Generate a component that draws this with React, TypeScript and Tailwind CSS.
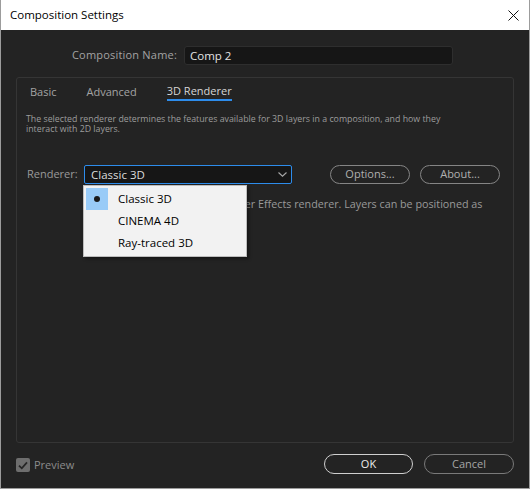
import { FC } from "react";

const Chevron: FC = () => (
  <svg width="9" height="5" viewBox="0 0 9 5" className="shrink-0">
    <path d="M0.5 0.5 L4.5 4.2 L8.5 0.5" fill="none" stroke="#a8a8a8" strokeWidth="1.1" />
  </svg>
);

const items = ["Classic 3D", "CINEMA 4D", "Ray-traced 3D"];

export default function App() {
  return (
    <div className="w-[530px] h-[489px] flex flex-col border-x border-b border-[#9c9c9c] bg-[#232323] font-['Open_Sans',sans-serif]">
      {/* title bar */}
      <div className="h-[30px] shrink-0 bg-white flex items-center justify-between pl-[9px] pr-[10px]">
        <span className="text-[11.5px] text-black">Composition Settings</span>
        <svg width="11" height="11" viewBox="0 0 11 11">
          <path d="M0.5 0.5 L10.5 10.5 M10.5 0.5 L0.5 10.5" stroke="#111" strokeWidth="1" />
        </svg>
      </div>

      <div className="flex-1 flex flex-col px-[15px]">
        {/* name row */}
        <div className="mt-[16px] flex items-center h-[19px]">
          <span className="w-[161px] text-right text-[11px] text-[#a3a3a3] tracking-[0.2px]">Composition Name:</span>
          <div className="ml-[7px] w-[269px] h-[19px] flex items-center bg-[#161616] border border-[#2e2e2e] rounded-[3px] pl-[5px] text-[11.5px] text-[#e2e2e2]">
            Comp 2
          </div>
        </div>

        {/* panel */}
        <div className="mt-[12px] flex-1 border border-[#353535] rounded-[3px] flex flex-col">
          <div className="pt-[5px] pl-[13px] flex gap-[30px] text-[11px]">
            <div className="h-[18px] flex items-center text-[#a3a3a3]">Basic</div>
            <div className="h-[18px] flex items-center text-[#a3a3a3]">Advanced</div>
            <div className="flex flex-col">
              <div className="h-[16px] flex items-center text-[#d6d6d6]">3D Renderer</div>
              <div className="h-[2px] bg-[#2d8ceb]" />
            </div>
          </div>

          <p className="mt-[13px] pl-[9px] w-[440px] text-[8.8px] leading-[10px] text-[#9c9c9c]">
            The selected renderer determines the features available for 3D layers in a composition, and how they interact with 2D layers.
          </p>

          <div className="mt-[31px] pl-[10px] flex items-center h-[19px]">
            <span className="w-[57px] text-[11px] text-[#9a9a9a]">Renderer:</span>
            <div className="relative">
              <div className="w-[208px] h-[19px] flex items-center justify-between bg-[#161616] border border-[#2d8ceb] rounded-[2px] pl-[6px] pr-[4px] text-[11.5px] text-[#dcdcdc]">
                <span>Classic 3D</span>
                <Chevron />
              </div>
              {/* open menu */}
              <div className="absolute left-[-1px] top-[20px] z-10 w-[164px] bg-[#f2f2f2] border border-[#bdbdbd] shadow-[2px_2px_3px_rgba(0,0,0,0.35)] pt-[2px] pb-[2px] pl-[2px]">
                {items.map((it, i) => (
                  <div key={it} className="h-[22px] flex items-center">
                    <div className={`w-[22px] h-[22px] flex items-center justify-center ${i === 0 ? "bg-[#99cbf7]" : ""}`}>
                      {i === 0 && <span className="w-[6px] h-[6px] rounded-full bg-[#1a1a1a]" />}
                    </div>
                    <span className="ml-[10px] text-[11.5px] text-black">{it}</span>
                  </div>
                ))}
              </div>
            </div>
            <button className="ml-[38px] w-[80px] h-[19px] rounded-full border border-[#858585] text-[11px] text-[#b0b0b0] flex items-center justify-center">
              Options...
            </button>
            <button className="ml-[10px] w-[80px] h-[19px] rounded-full border border-[#858585] text-[11px] text-[#b0b0b0] flex items-center justify-center">
              About...
            </button>
          </div>

          <p className="mt-[12px] pl-[95px] pr-[10px] text-[10.75px] leading-[16px] text-[#9a9a9a]">
            Classic 3D: The existing After Effects renderer. Layers can be positioned as planes in 3D space.
          </p>
        </div>

        {/* footer */}
        <div className="h-[45px] shrink-0 flex items-start pt-[11px]">
          <div className="mt-[3px] flex items-center">
            <div className="w-[14px] h-[14px] rounded-[2px] bg-[#6e6e6e] flex items-center justify-center">
              <svg width="10" height="9" viewBox="0 0 10 9">
                <path d="M1 4.6 L3.8 7.3 L9 1.4" fill="none" stroke="#262626" strokeWidth="1.8" />
              </svg>
            </div>
            <span className="ml-[4px] text-[11px] text-[#8c8c8c]">Preview</span>
          </div>
          <div className="ml-auto flex gap-[11px]">
            <button className="w-[89px] h-[20px] rounded-full border border-[#cfcfcf] text-[11px] text-[#ececec] flex items-center justify-center">
              OK
            </button>
            <button className="w-[90px] h-[20px] rounded-full border border-[#7a7a7a] text-[11px] text-[#a6a6a6] flex items-center justify-center">
              Cancel
            </button>
          </div>
        </div>
      </div>
    </div>
  );
}
